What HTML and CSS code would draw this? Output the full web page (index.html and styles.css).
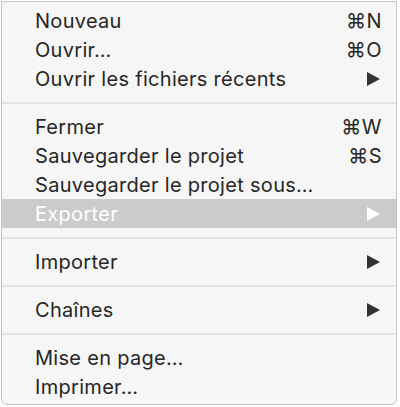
FILE: index.html
```html
<!DOCTYPE html>
<html lang="fr">
<head>
<meta charset="utf-8">
<title>Menu Fichier</title>
<link rel="stylesheet" href="styles.css">
</head>
<body>
<div class="menu">
  <div class="item"><span class="label">Nouveau</span><span class="key">⌘N</span></div>
  <div class="item"><span class="label">Ouvrir…</span><span class="key">⌘O</span></div>
  <div class="item"><span class="label">Ouvrir les fichiers récents</span><svg class="arrow" viewBox="0 0 13 14"><path d="M0 0 L13 7 L0 14 Z"/></svg></div>
  <div class="sep"></div>
  <div class="item"><span class="label">Fermer</span><span class="key">⌘W</span></div>
  <div class="item"><span class="label">Sauvegarder le projet</span><span class="key">⌘S</span></div>
  <div class="item"><span class="label">Sauvegarder le projet sous…</span></div>
  <div class="item active"><span class="label">Exporter</span><svg class="arrow" viewBox="0 0 13 14"><path d="M0 0 L13 7 L0 14 Z"/></svg></div>
  <div class="sep"></div>
  <div class="item"><span class="label">Importer</span><svg class="arrow" viewBox="0 0 13 14"><path d="M0 0 L13 7 L0 14 Z"/></svg></div>
  <div class="sep"></div>
  <div class="item"><span class="label">Chaînes</span><svg class="arrow" viewBox="0 0 13 14"><path d="M0 0 L13 7 L0 14 Z"/></svg></div>
  <div class="sep"></div>
  <div class="item"><span class="label">Mise en page…</span></div>
  <div class="item"><span class="label">Imprimer…</span></div>
</div>
</body>
</html>
```
FILE: styles.css
```css
html, body {
  margin: 0;
  padding: 0;
  background: #ffffff;
}
body {
  padding: 1px 0 0 1px;
  font-family: Inter, "DejaVu Sans", sans-serif;
}
.menu {
  width: 394px;
  box-sizing: content-box;
  background: #f6f6f6;
  border: 1px solid #c4c4c4;
  border-radius: 0 0 6px 6px;
  padding: 4px 0 3px 0;
}
.item {
  height: 29px;
  display: flex;
  align-items: center;
  justify-content: space-between;
  padding: 0 14px 0 33px;
  font-size: 20px;
  letter-spacing: 0.3px;
  color: #262626;
}
.item .key {
  letter-spacing: 0.5px;
}
.item .arrow {
  width: 13px;
  height: 14px;
  fill: #333333;
  margin-right: 2px;
}
.item.active {
  background: #cbcbcb;
  color: #ffffff;
}
.item.active .arrow {
  fill: #ffffff;
}
.sep {
  height: 19px;
  display: flex;
  align-items: center;
}
.sep::before {
  content: "";
  display: block;
  width: 100%;
  height: 2px;
  background: #e3e3e3;
}
```
